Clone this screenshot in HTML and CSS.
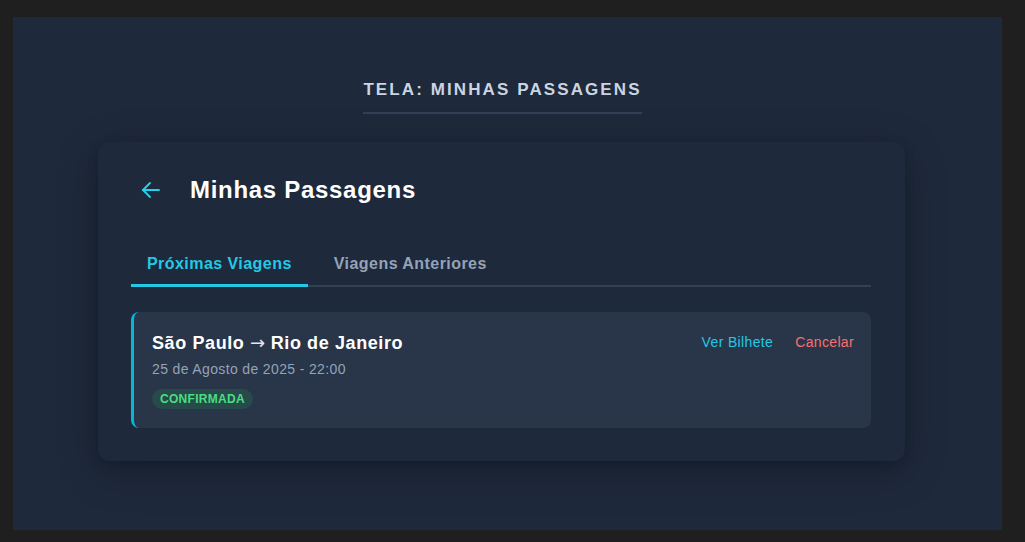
FILE: index.html
```html
<!DOCTYPE html>
<html lang="pt-BR">
<head>
<meta charset="UTF-8">
<title>Minhas Passagens</title>
<link rel="stylesheet" href="styles.css">
</head>
<body>
<div class="frame">
  <div class="screen-label"><h2 class="label-text">TELA: MINHAS PASSAGENS</h2></div>
  <div class="card">
    <div class="card-header">
      <button class="back-btn" aria-label="Voltar">
        <svg width="24" height="24" viewBox="0 0 24 24" fill="none" stroke="currentColor" stroke-width="1.8" stroke-linecap="round" stroke-linejoin="round"><path d="M20 12H4"/><path d="M11 19l-7-7 7-7"/></svg>
      </button>
      <h1 class="card-title">Minhas Passagens</h1>
    </div>
    <div class="tabs">
      <div class="tab active">Próximas Viagens</div>
      <div class="tab">Viagens Anteriores</div>
    </div>
    <div class="ticket">
      <div class="ticket-info">
        <div class="route">São Paulo <span class="arrow">→</span> Rio de Janeiro</div>
        <div class="date">25 de Agosto de 2025 - 22:00</div>
        <span class="badge">CONFIRMADA</span>
      </div>
      <div class="actions">
        <a class="link view">Ver Bilhete</a>
        <a class="link cancel">Cancelar</a>
      </div>
    </div>
  </div>
</div>
</body>
</html>
```
FILE: styles.css
```css
html, body {
  margin: 0;
  padding: 0;
  background: #1f1f1f;
  font-family: "Liberation Sans", Arial, sans-serif;
}
body {
  padding: 17px 23px 12px 13px;
}
.frame {
  height: 513px;
  box-sizing: border-box;
  background: #1e293b;
  padding: 63px 12px 0 0;
  display: flex;
  flex-direction: column;
  align-items: center;
  overflow: hidden;
}
.screen-label {
  margin-bottom: 28px;
}
.label-text {
  margin: 0;
  font-size: 17px;
  line-height: 20px;
  font-weight: 700;
  letter-spacing: 2.1px;
  color: #cbd5e1;
  padding-bottom: 12px;
  border-bottom: 2px solid #334155;
  margin-right: -2px;
}
.card {
  width: 807px;
  box-sizing: border-box;
  padding: 32px 34px 33px 33px;
  background: #1e293b;
  border-radius: 12px;
  box-shadow: 0 10px 40px rgba(0, 0, 0, 0.25), 0 4px 12px rgba(0, 0, 0, 0.12);
}
.card-header {
  display: flex;
  align-items: center;
  height: 32px;
  gap: 18px;
  margin-bottom: 36px;
}
.back-btn {
  background: none;
  border: 0;
  padding: 0 0 0 8px;
  color: #22d3ee;
  display: flex;
  align-items: center;
  width: 41px;
  cursor: pointer;
}
.card-title {
  margin: 0;
  font-size: 24px;
  font-weight: 700;
  letter-spacing: 0.7px;
  color: #ffffff;
}
.tabs {
  display: flex;
  gap: 10px;
  border-bottom: 2px solid #334155;
  margin-bottom: 25px;
}
.tab {
  padding: 12px 16px 10px;
  font-size: 16px;
  line-height: 20px;
  font-weight: 700;
  letter-spacing: 0.45px;
  color: #94a3b8;
  border-bottom: 3px solid transparent;
  margin-bottom: -2px;
}
.tab.active {
  color: #22c9e6;
  border-bottom-color: #22c9e6;
}
.ticket {
  display: flex;
  justify-content: space-between;
  align-items: flex-start;
  background: rgba(51, 65, 85, 0.5);
  border-left: 3px solid #06b6d4;
  border-radius: 8px;
  padding: 20px 17px 19px 18px;
}
.route {
  font-size: 18px;
  line-height: 22px;
  font-weight: 700;
  letter-spacing: 0.6px;
  color: #ffffff;
}
.arrow {
  font-family: "DejaVu Sans", sans-serif;
  font-weight: 400;
  font-size: 18px;
  letter-spacing: 0;
  color: #e2e8f0;
}
.date {
  margin-top: 5px;
  font-size: 14px;
  line-height: 20px;
  letter-spacing: 0.36px;
  color: #94a3b8;
}
.badge {
  display: inline-block;
  margin-top: 10px;
  padding: 3px 8px;
  font-size: 12px;
  line-height: 14px;
  font-weight: 700;
  letter-spacing: 0.3px;
  color: #4ade80;
  background: rgba(34, 197, 94, 0.15);
  border-radius: 10px;
}
.actions {
  display: flex;
  gap: 22px;
  padding-top: 0;
}
.link {
  font-size: 14px;
  line-height: 20px;
  letter-spacing: 0.35px;
  cursor: pointer;
}
.link.view { color: #22c9e6; }
.link.cancel { color: #f87171; }
```
